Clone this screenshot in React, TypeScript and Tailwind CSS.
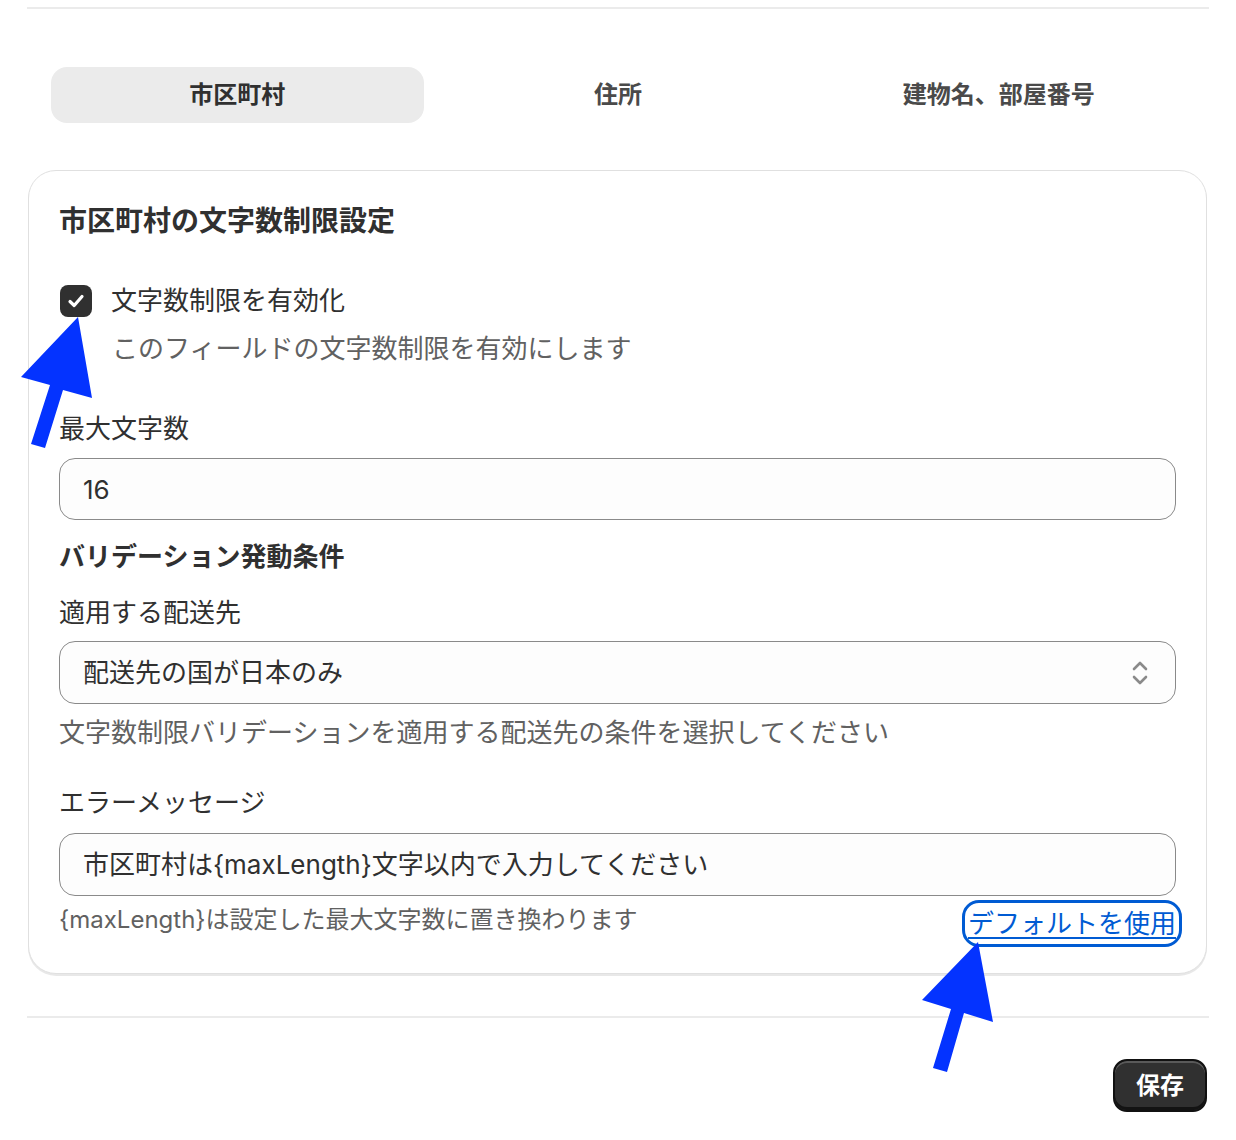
import React from "react";

const tabs = ["市区町村", "住所", "建物名、部屋番号"];

function SelectIcon() {
    return (
        <svg width="20" height="30" viewBox="0 0 20 30" fill="none" stroke="#8a8a8a" strokeWidth="2.6" strokeLinecap="round" strokeLinejoin="round">
            <path d="M4 11 L10 5 L16 11" />
            <path d="M4 19 L10 25 L16 19" />
        </svg>
    );
}

function Arrows() {
    return (
        <svg className="absolute left-0 top-0 pointer-events-none" width="1236" height="1140" viewBox="0 0 1236 1140">
            <polygon fill="#0433ff" points="78,317 92,398 63,390 45,448 31,444 50,385 21,377" />
            <polygon fill="#0433ff" points="978,942 993,1022 964,1013 947,1072 933,1068 951,1009 922,1000" />
        </svg>
    );
}

export default function App() {
    return (
        <div className="relative w-full h-[1140px] bg-white px-[27px] font-['Inter','Noto_Sans_CJK_JP',sans-serif] text-[#303030] overflow-hidden">
            {/* top divider */}
            <div className="mt-[7px] h-[2px] bg-[#ebebeb]"></div>

            {/* Tabs */}
            <div className="mt-[58px] px-[24px] grid grid-cols-3 gap-[8px]">
                {tabs.map((t, i) => (
                    <div
                        key={t}
                        className={
                            i === 0
                                ? "h-[56px] rounded-[16px] bg-[#ebebeb] flex items-center justify-center text-[24px] font-semibold text-[#303030]"
                                : "h-[56px] rounded-[16px] flex items-center justify-center text-[24px] font-semibold text-[#4a4a4a]"
                        }
                    >
                        {t}
                    </div>
                ))}
            </div>

            {/* Card */}
            <div className="mt-[47px] ml-px mr-[2px] rounded-[28px] border border-[#e0e0e0] bg-white shadow-[0_2px_0_0_rgba(0,0,0,0.09)] pl-[30px] pr-[30px] pt-[30px] pb-[32px]">
                <h2 className="text-[28px] leading-[40px] font-bold">市区町村の文字数制限設定</h2>

                {/* checkbox */}
                <div className="mt-[40px] flex items-center h-[40px]">
                    <div className="ml-px w-[32px] h-[32px] rounded-[8px] bg-[#303030] flex items-center justify-center shrink-0">
                        <svg width="22" height="22" viewBox="0 0 22 22" fill="none" stroke="white" strokeWidth="3.2" strokeLinecap="round" strokeLinejoin="round">
                            <path d="M5 11.5 L9.2 15.5 L17 6.5" />
                        </svg>
                    </div>
                    <span className="ml-[19px] text-[26px] leading-[40px]">文字数制限を有効化</span>
                </div>
                <p className="mt-[8px] ml-[53px] text-[26px] leading-[40px] text-[#616161]">このフィールドの文字数制限を有効にします</p>

                {/* max length */}
                <label className="mt-[40px] block text-[26px] leading-[40px]">最大文字数</label>
                <div className="mt-[9px] h-[62px] rounded-[16px] border border-[#8a8a8a] bg-[#fdfdfd] flex items-center px-[23px] text-[26px]">
                    16
                </div>

                <h3 className="mt-[17px] text-[26px] leading-[40px] font-bold">バリデーション発動条件</h3>

                <label className="mt-[16px] block text-[26px] leading-[40px]">適用する配送先</label>
                <div className="mt-[8px] h-[63px] rounded-[16px] border border-[#8a8a8a] bg-[#fdfdfd] flex items-center justify-between pl-[23px] pr-[25px] text-[26px]">
                    <span>配送先の国が日本のみ</span>
                    <SelectIcon />
                </div>
                <p className="mt-[9px] text-[26px] leading-[40px] text-[#616161]">文字数制限バリデーションを適用する配送先の条件を選択してください</p>

                <label className="mt-[30px] block text-[26px] leading-[40px]">エラーメッセージ</label>
                <div className="mt-[10px] h-[63px] rounded-[16px] border border-[#8a8a8a] bg-[#fdfdfd] flex items-center px-[23px] text-[26px]">
                    市区町村は{"{maxLength}"}文字以内で入力してください
                </div>
                <div className="flex items-start justify-between">
                    <p className="mt-[6px] text-[24px] leading-[36px] text-[#616161]">{"{maxLength}"}は設定した最大文字数に置き換わります</p>
                    <a
                        href="#"
                        className="mt-[10px] text-[26px] leading-[35px] text-[#005bd3] underline underline-offset-[4px] rounded-[11px] outline-[3px] outline-solid outline-[#005bd3] outline-offset-[3px]"
                    >
                        デフォルトを使用
                    </a>
                </div>
            </div>

            {/* bottom divider */}
            <div className="mt-[42px] h-[2px] bg-[#ebebeb]"></div>

            {/* footer */}
            <div className="mt-[41px] flex justify-end">
                <button className="mr-[2px] h-[53px] w-[94px] rounded-[14px] bg-[#303030] text-white text-[24px] font-bold border-2 border-[#111] shadow-[inset_0_2px_0_rgba(255,255,255,0.2),inset_0_-3px_0_rgba(0,0,0,0.6)]">
                    保存
                </button>
            </div>

            <Arrows />
        </div>
    );
}
